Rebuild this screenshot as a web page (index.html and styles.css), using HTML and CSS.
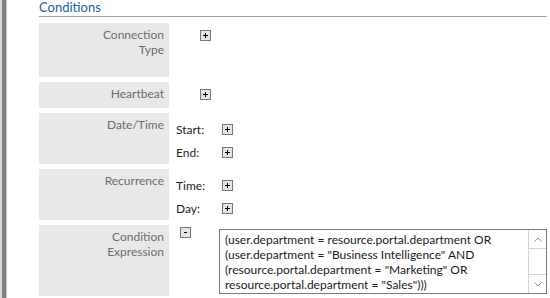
FILE: index.html
```html
<!DOCTYPE html>
<html>
<head>
  <meta charset="UTF-8">
  <title>Conditions</title>
  <link rel="stylesheet" href="styles.css">
</head>
<body>
  <div class="page">
    <div class="rail"></div>
    <div class="content">
      <h2 class="title">Conditions</h2>

      <div class="rows">
        <!--connection type-->
        <div class="row row-conn">
          <div class="label">Connection<br>Type</div>
          <div class="value value-btn">
            <span class="btn"><svg width="5" height="5" viewBox="0 0 5 5"><path d="M0 2.5H5M2.5 0V5" stroke="#000" stroke-width="1"/></svg></span>
          </div>
        </div>

        <!--heartbeat-->
        <div class="row row-hb">
          <div class="label">Heartbeat</div>
          <div class="value value-btn">
            <span class="btn"><svg width="5" height="5" viewBox="0 0 5 5"><path d="M0 2.5H5M2.5 0V5" stroke="#000" stroke-width="1"/></svg></span>
          </div>
        </div>

        <!--date/time-->
        <div class="row row-pairs">
          <div class="label">Date/Time</div>
          <div class="value value-pairs">
            <div class="pair">
              <span class="pair-label">Start:</span>
              <span class="btn"><svg width="5" height="5" viewBox="0 0 5 5"><path d="M0 2.5H5M2.5 0V5" stroke="#000" stroke-width="1"/></svg></span>
            </div>
            <div class="pair">
              <span class="pair-label">End:</span>
              <span class="btn"><svg width="5" height="5" viewBox="0 0 5 5"><path d="M0 2.5H5M2.5 0V5" stroke="#000" stroke-width="1"/></svg></span>
            </div>
          </div>
        </div>

        <!--recurrence-->
        <div class="row row-pairs">
          <div class="label">Recurrence</div>
          <div class="value value-pairs">
            <div class="pair">
              <span class="pair-label">Time:</span>
              <span class="btn"><svg width="5" height="5" viewBox="0 0 5 5"><path d="M0 2.5H5M2.5 0V5" stroke="#000" stroke-width="1"/></svg></span>
            </div>
            <div class="pair">
              <span class="pair-label">Day:</span>
              <span class="btn"><svg width="5" height="5" viewBox="0 0 5 5"><path d="M0 2.5H5M2.5 0V5" stroke="#000" stroke-width="1"/></svg></span>
            </div>
          </div>
        </div>

        <!--condition expression-->
        <div class="row row-cond">
          <div class="label">Condition<br>Expression</div>
          <div class="value value-expr">
            <span class="btn btn-minus"><svg width="5" height="5" viewBox="0 0 5 5"><path d="M1 2.5H4" stroke="#000" stroke-width="1"/></svg></span>
            <div class="textarea">
              <div class="text">(user.department = resource.portal.department OR<br>(user.department = "Business Intelligence" AND<br>(resource.portal.department = "Marketing" OR<br>resource.portal.department = "Sales")))</div>
              <div class="scroll">
                <div class="arrow arrow-up"><svg width="8" height="5" viewBox="0 0 8 5"><path d="M0.5 4.5L4 1L7.5 4.5" fill="none" stroke="#8c8c8c" stroke-width="1"/></svg></div>
                <div class="arrow arrow-down"><svg width="8" height="5" viewBox="0 0 8 5"><path d="M0.5 0.5L4 4L7.5 0.5" fill="none" stroke="#8c8c8c" stroke-width="1"/></svg></div>
              </div>
            </div>
          </div>
        </div>
      </div>
    </div>
  </div>
</body>
</html>
```

FILE: styles.css
```css
body{
  margin:0;
  font-family:Lato,"Noto Sans",sans-serif;
  font-size:12px;
  color:#1e1e1e;
  background:#fff;
}

.page{
  display:flex;
  height:298px;
}
.rail{
  box-sizing:border-box;
  width:7px;
  background:#808080;
  border-left:2px solid #dadada;
  border-right:1px solid #c2c2c2;
}
.content{
  flex:1;
  padding:0 3px 0 32px;
}

.title{
  margin:0 0 6px;
  padding-bottom:1px;
  font-size:13px;
  font-weight:normal;
  line-height:15px;
  color:#2461a8;
  border-bottom:1px solid #a3a3a3;
}

.rows{
  display:flex;
  flex-direction:column;
  gap:5px;
}
.row{
  display:flex;
}
.row-conn{height:54px;}
.row-hb{height:26px;}
.row-pairs{height:51px;}
.row-cond{height:71px;}

.label{
  box-sizing:border-box;
  width:130px;
  padding:4px 5px 0 0;
  text-align:right;
  line-height:15px;
  color:#6b6b6b;
  background:#e8e8e8;
}

.value{
  flex:1;
}
.value-btn{
  padding:7px 0 0 31px;
}
.value-pairs{
  padding:5px 0 0 7px;
}
.pair{
  display:flex;
  align-items:center;
  height:23px;
}
.pair-label{
  width:46px;
}

.btn{
  display:flex;
  align-items:center;
  justify-content:center;
  box-sizing:border-box;
  width:11px;
  height:11px;
  border:1px solid #777;
  background:#e4e4e4;
}
.btn svg{display:block;}

.value-expr{
  display:flex;
  align-items:flex-start;
  padding:4px 0 2px 11px;
}
.btn-minus{
  flex:none;
  margin-top:-2px;
}

.textarea{
  flex:1;
  display:flex;
  box-sizing:border-box;
  height:65px;
  margin-left:28px;
  border:1px solid #7a7a7a;
  background:#fff;
}
.text{
  flex:1;
  padding:2px 0 0 5px;
  line-height:15px;
  color:#1a1a1a;
  white-space:nowrap;
  overflow:hidden;
}
.scroll{
  display:flex;
  flex-direction:column;
  justify-content:space-between;
  width:17px;
  border-left:1px solid #d4d4d4;
}
.arrow{
  display:flex;
  align-items:center;
  justify-content:center;
  height:18px;
}
.arrow-up{border-bottom:1px solid #d4d4d4;}
.arrow-down{border-top:1px solid #d4d4d4;}
```
